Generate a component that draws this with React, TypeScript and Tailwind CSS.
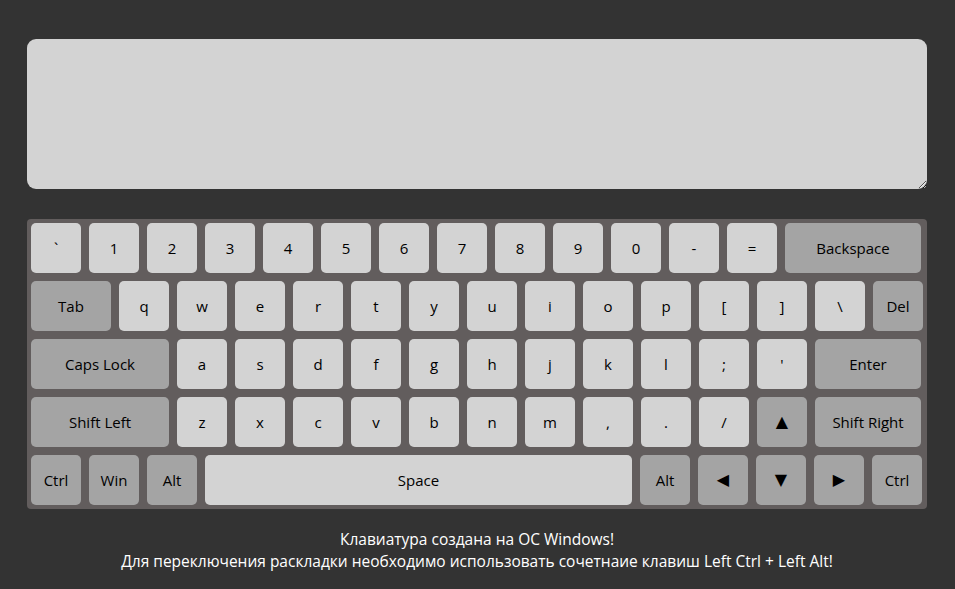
import type { ReactNode } from "react";

type Key = { label: ReactNode; w?: string; dark?: boolean };

const light = (s: string): Key => ({ label: s });

const ROWS: Key[][] = [
  [
    ..."`1234567890-=".split("").map(light),
    { label: "Backspace", w: "w-[136px]", dark: true },
  ],
  [
    { label: "Tab", w: "w-[80px]", dark: true },
    ..."qwertyuiop[]\\".split("").map(light),
    { label: "Del", dark: true },
  ],
  [
    { label: "Caps Lock", w: "w-[138px]", dark: true },
    ..."asdfghjkl;'".split("").map(light),
    { label: "Enter", w: "w-[106px]", dark: true },
  ],
  [
    { label: "Shift Left", w: "w-[138px]", dark: true },
    ..."zxcvbnm,./".split("").map(light),
    { label: "▲", dark: true },
    { label: "Shift Right", w: "w-[106px]", dark: true },
  ],
  [
    { label: "Ctrl", dark: true },
    { label: "Win", dark: true },
    { label: "Alt", dark: true },
    { label: "Space", w: "w-[427px]" },
    { label: "Alt", dark: true },
    { label: "◀", dark: true },
    { label: "▼", dark: true },
    { label: "▶", dark: true },
    { label: "Ctrl", dark: true },
  ],
];

function KeyCap({ k }: { k: Key }) {
  const arrow = typeof k.label === "string" && "▲▼◀▶".includes(k.label);
  return (
    <div
      className={`m-1 flex h-[50px] shrink-0 items-center justify-center rounded-[5px] text-black ${k.w ?? "w-[50px]"} ${
        k.dark ? "bg-[#a4a4a4]" : "bg-[#d3d3d3]"
      } ${arrow ? "font-['DejaVu_Sans'] text-[16px]" : "text-[15px]"}`}
    >
      {k.label}
    </div>
  );
}

export default function App() {
  return (
    <div
      className="min-h-screen bg-[#333333] pt-[39px]"
      style={{ fontFamily: '"Open Sans", "Noto Sans", sans-serif' }}
    >
      <div className="ml-[27px] w-[900px]">
        {/* поле ввода */}
        <textarea className="block h-[150px] w-full rounded-[9px] bg-[#d3d3d3] p-2 text-[15px] text-black outline-none" />

        {/* клавиатура */}
        <div className="mt-[30px] rounded-[4px] bg-[#625d5d]">
          {ROWS.map((row, i) => (
            <div key={i} className="flex">
              {row.map((k, j) => (
                <KeyCap key={j} k={k} />
              ))}
            </div>
          ))}
        </div>

        <div className="mt-[19px] text-center text-[15.5px] leading-[22px] text-white">
          <p>Клавиатура создана на ОС Windows!</p>
          <p>Для переключения раскладки необходимо использовать сочетнаие клавиш Left Ctrl + Left Alt!</p>
        </div>
      </div>
    </div>
  );
}
